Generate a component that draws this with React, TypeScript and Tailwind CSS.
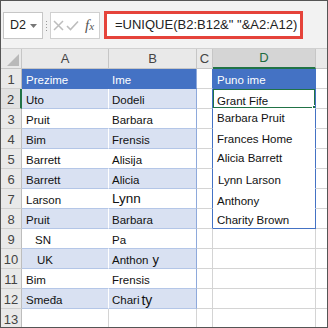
import React from 'react';

type Row = {
  a?: React.ReactNode;
  b?: React.ReactNode;
  d?: React.ReactNode;
  aPad?: string;
  bPad?: string;
  dPad?: string;
};

const rows: Row[] = [
  { a: 'Prezime', b: 'Ime', d: 'Puno ime' },
  { a: 'Uto', b: 'Dodeli', d: 'Grant Fife', dPad: 'pb-0' },
  { a: 'Pruit', b: 'Barbara', d: 'Barbara Pruit', dPad: 'pb-[3px]' },
  { a: 'Bim', b: 'Frensis', d: 'Frances Home', dPad: 'pb-[2px]' },
  { a: 'Barrett', b: 'Alisija', d: 'Alicia Barrett', dPad: 'pb-[3px]' },
  { a: 'Barrett', b: 'Alicia', d: 'Lynn Larson', dPad: 'pb-[1px] pl-[5px]' },
  {
    a: 'Larson',
    b: <span className="text-[13.5px]">Lynn</span>,
    d: 'Anthony',
    bPad: 'pb-[2px]',
    dPad: 'pb-0',
  },
  { a: 'Pruit', b: 'Barbara', d: 'Charity Brown' },
  { a: 'SN', b: 'Pa', aPad: 'pl-[13px]' },
  {
    a: 'UK',
    aPad: 'pl-[15px]',
    b: (
      <>
        Anthon<span className="ml-[4px] text-[13px] align-[1px]">y</span>
      </>
    ),
  },
  { a: 'Bim', b: 'Frensis' },
  {
    a: 'Smeđa',
    b: (
      <>
        Chari<span className="ml-[2px] text-[14px] align-[3px]">ty</span>
      </>
    ),
  },
  {},
];

const cellBase =
  'flex items-end overflow-hidden whitespace-nowrap border-r border-b leading-[14px] text-[11.5px] text-[#111]';

function aClass(n: number) {
  if (n === 1) return 'bg-[#4472c4] text-white border-b-[#4472c4] border-r-[#4472c4]';
  if (n === 13) return 'bg-white border-b-[#d4d4d4] border-r-[#d4d4d4]';
  if (n % 2 === 0) return 'bg-[#d9e1f2] border-b-[#b4c6e7] border-r-white';
  return 'bg-white border-b-[#b4c6e7] border-r-white';
}

function bClass(n: number) {
  if (n === 1) return 'bg-[#4472c4] text-white border-b-[#4472c4] border-r-[#8ea9db]';
  if (n === 13) return 'bg-white border-b-[#d4d4d4] border-r-[#d4d4d4]';
  if (n % 2 === 0) return 'bg-[#d9e1f2] border-b-[#b4c6e7] border-r-[#8ea9db]';
  return 'bg-white border-b-[#b4c6e7] border-r-[#8ea9db]';
}

function dClass(n: number) {
  if (n === 1) return 'bg-[#4472c4] text-white border-b-[#4472c4] border-r-[#4472c4]';
  if (n < 8) return 'bg-white border-b-white border-r-[#4472c4]';
  if (n === 8) return 'bg-white border-b-[#4472c4] border-r-[#4472c4]';
  return 'bg-white border-b-[#d4d4d4] border-r-[#d4d4d4]';
}

function FormulaBar() {
  return (
    <div className="h-[47px] shrink-0 bg-[#f2f2f2] flex items-start pt-[10px] pl-[2px] font-['Liberation_Sans',Arial,sans-serif]">
      <div className="mt-[1px] w-[40px] h-[27px] bg-white border border-[#c6c6c6] flex items-center pl-[6px] text-[12.5px] text-[#222]">
        D2
        <svg width="7" height="4" viewBox="0 0 7 4" className="ml-[4px]">
          <path d="M0 0 L7 0 L3.5 4 Z" fill="#777" />
        </svg>
      </div>
      <div className="ml-[3px] mt-[10px] flex flex-col gap-[2px]">
        <div className="w-[1px] h-[1px] bg-[#999]" />
        <div className="w-[1px] h-[1px] bg-[#999]" />
        <div className="w-[1px] h-[1px] bg-[#999]" />
        <div className="w-[1px] h-[1px] bg-[#999]" />
      </div>
      <div className="ml-[3px] mt-[1px] w-[50px] h-[27px] bg-white border border-[#d0d0d0] flex items-center pl-[2px]">
        <svg width="11" height="11" viewBox="0 0 11 11">
          <path d="M1 1 L10 10 M10 1 L1 10" stroke="#bdbdbd" strokeWidth="1.5" fill="none" />
        </svg>
        <svg width="13" height="11" viewBox="0 0 13 11" className="ml-[2px]">
          <path d="M1 6 L4.5 9.5 L12 1.5" stroke="#bdbdbd" strokeWidth="1.6" fill="none" />
        </svg>
        <span className="ml-[6px] font-['Liberation_Serif',serif] italic text-[15px] leading-none text-[#555]">
          f<span className="text-[11px]">x</span>
        </span>
      </div>
      <div className="ml-[4px] w-[199px] h-[28px] border-[3px] border-[#e5433a] bg-white flex items-center pl-[8px] text-[13px] text-[#222] whitespace-nowrap">
        =UNIQUE(B2:B12&amp;" "&amp;A2:A12)
      </div>
    </div>
  );
}

function Grid() {
  return (
    <div className="grid grid-cols-[21px_87px_88px_16px_103px_11px] auto-rows-[20px] font-['Liberation_Sans',Arial,sans-serif] border-t border-[#d0d0d0]">
      {/* column headers */}
      <div className="bg-[#e9e9e9] border-r border-b border-[#c6c6c6] flex items-end justify-end pr-[2px] pb-[2px]">
        <svg width="12" height="12" viewBox="0 0 12 12">
          <path d="M12 0 L12 12 L0 12 Z" fill="#b9b9b9" />
        </svg>
      </div>
      <div className="bg-[#e9e9e9] border-r border-b border-[#c6c6c6] flex items-center justify-center text-[13px] text-[#444]">A</div>
      <div className="bg-[#e9e9e9] border-r border-b border-[#c6c6c6] flex items-center justify-center text-[13px] text-[#444]">B</div>
      <div className="bg-[#e9e9e9] border-r border-b border-[#c6c6c6] flex items-center justify-center text-[13px] text-[#444]">C</div>
      <div className="bg-[#d5d5d5] border-r border-[#c6c6c6] border-b-2 border-b-[#217346] flex items-center justify-center text-[13px] text-[#1d6b40]">D</div>
      <div className="bg-[#e9e9e9] border-b border-[#c6c6c6]" />

      {rows.map((r, i) => {
        const n = i + 1;
        return (
          <React.Fragment key={n}>
            <div
              className={
                n === 2
                  ? 'bg-[#e1e1e1] border-b border-b-[#d0d0d0] border-r-2 border-r-[#217346] flex items-center justify-center pt-[2px] text-[13px] text-[#333]'
                  : 'bg-[#e9e9e9] border-b border-r border-b-[#d0d0d0] border-r-[#bdbdbd] flex items-center justify-center pt-[2px] text-[13px] text-[#444]'
              }
            >
              {n}
            </div>
            <div className={`${cellBase} ${aClass(n)} ${r.aPad ?? 'pl-[4px]'} pb-[1px]`}>{r.a}</div>
            <div className={`${cellBase} ${bClass(n)} pl-[3px] ${r.bPad ?? 'pb-[1px]'}`}>{r.b}</div>
            <div
              className={`border-b border-r bg-white border-b-[#d4d4d4] ${
                n <= 8 ? 'border-r-[#4472c4]' : 'border-r-[#d4d4d4]'
              }`}
            />
            <div className={`${cellBase} ${dClass(n)} relative ${r.dPad ?? 'pb-[1px] pl-[4px]'} ${r.dPad && r.dPad.includes('pl-') ? '' : 'pl-[4px]'}`}>
              {r.d}
              {n === 2 && (
                <>
                  <div className="absolute -left-[1px] -top-[1px] -right-[1px] -bottom-[1px] border-2 border-[#217346]" />
                  <div className="absolute -right-[3px] -bottom-[3px] w-[6px] h-[6px] bg-[#217346] border border-white" />
                </>
              )}
            </div>
            <div className="bg-white border-b border-[#d4d4d4]" />
          </React.Fragment>
        );
      })}
    </div>
  );
}

export default function App() {
  return (
    <div className="w-[328px] h-[328px] overflow-hidden bg-white border border-[#555] flex flex-col">
      <FormulaBar />
      <Grid />
    </div>
  );
}
